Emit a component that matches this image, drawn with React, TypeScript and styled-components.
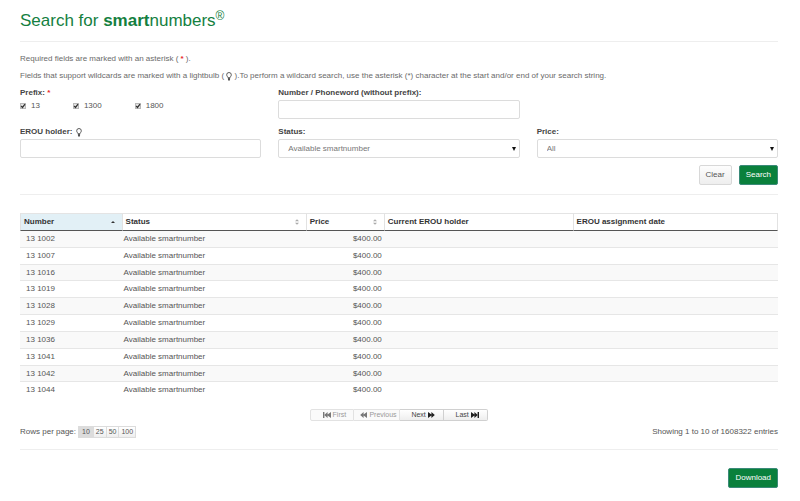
import React from "react";
import styled, { createGlobalStyle, css } from "styled-components";

const GlobalStyle = createGlobalStyle`
  *, *::before, *::after { box-sizing: border-box; }
  body {
    margin: 0;
    background: #fff;
    color: #555;
    font: 8px/12px "Liberation Sans", Arial, sans-serif;
  }
  button, input, select { font: inherit; color: inherit; margin: 0; }
`;

const Page = styled.main`
  padding: 8px 22px 12px 20px;
`;

const Title = styled.h1`
  margin: 0;
  padding-bottom: 7px;
  border-bottom: 1px solid #eee;
  color: #14803f;
  font-size: 17px;
  font-weight: 400;
  line-height: 26px;

  sup {
    font-size: 12px;
    line-height: 0;
    vertical-align: 6px;
  }
`;

const Intro = styled.div`
  padding-top: 11px;
  color: #6a6a6a;
`;

const Note = styled.p`
  margin: 0;
  padding-bottom: 4px;

  & + & { padding-top: 1px; }
`;

const Asterisk = styled.span`
  color: #e8262a;
  font-weight: 700;
`;

const SearchForm = styled.form`
  padding-bottom: 9px;
  border-bottom: 1px solid #eee;
`;

const FieldGrid = styled.div`
  display: grid;
  grid-template-columns: repeat(3, 1fr);
  column-gap: 17px;
  row-gap: 6px;
`;

const Field = styled.div`
  grid-column: ${(p: { $column?: number }) => p.$column ?? "auto"};
`;

const Label = styled.label`
  display: flex;
  align-items: center;
  gap: 4px;
  height: 14px;
  color: #444;
  font-weight: 700;
`;

const PrefixGroup = styled.fieldset`
  margin: 0;
  padding: 0;
  border: 0;
  min-width: 0;
`;

const Legend = styled.legend`
  padding: 0;
  height: 14px;
  line-height: 14px;
  color: #444;
  font-weight: 700;
`;

const Choices = styled.div`
  display: flex;
  gap: 33px;
`;

const Choice = styled.label`
  display: flex;
  align-items: center;
  gap: 5px;
`;

const CheckFrame = styled.span`
  display: grid;
  width: 6px;
  height: 6px;

  > * { grid-area: 1 / 1; }
  svg { pointer-events: none; visibility: hidden; }
  input:checked + svg { visibility: visible; }
`;

const Checkbox = styled.input`
  appearance: none;
  width: 6px;
  height: 6px;
  border: 1px solid #b8b8b8;
  background: #e4e4e4;
`;

const control = css`
  display: block;
  width: 100%;
  height: 19px;
  border: 1px solid #dcdcdc;
  border-radius: 2px;
  background: #fff;
`;

const TextInput = styled.input`
  ${control}
  padding: 0 8px;
`;

const SelectFrame = styled.div`
  display: grid;
  align-items: center;

  > * { grid-area: 1 / 1; }
  svg { justify-self: end; margin-right: 4px; pointer-events: none; }
`;

const Select = styled.select`
  ${control}
  appearance: none;
  padding: 0 9px;
  color: #777;
`;

const Actions = styled.div`
  display: flex;
  justify-content: flex-end;
  gap: 7px;
  padding-top: ${(p: { $top: number }) => p.$top}px;
`;

const Button = styled.button<{ $primary?: boolean }>`
  height: 20px;
  padding: 0 6px;
  border: 1px solid ${(p) => (p.$primary ? "#3a8a78" : "#d8d8d8")};
  border-radius: 2px;
  background: ${(p) => (p.$primary ? "#0a803c" : "linear-gradient(#fdfdfd, #eee)")};
  color: ${(p) => (p.$primary ? "#fff" : "#555")};
  line-height: 16px;
`;

const Results = styled.table`
  width: 100%;
  height: 185px;
  margin-top: 18px;
  table-layout: fixed;
  border-collapse: separate;
  border-spacing: 0;
`;

const HeaderCell = styled.th<{ $sorted?: boolean }>`
  height: 18px;
  padding: 0 3px;
  border-top: 1px solid #e4e4e4;
  border-bottom: 1px solid #555;
  border-left: 1px solid #e2e2e2;
  background: ${(p) => (p.$sorted ? "#e2f0f6" : "#fff")};
  color: #333;
  text-align: left;

  &:last-child { border-right: 1px solid #e2e2e2; }
`;

const HeaderInner = styled.div`
  display: flex;
  align-items: center;
  justify-content: space-between;
  padding-right: 4px;
`;

const Row = styled.tr`
  &:nth-child(odd) { background: #f9f9f9; }
  &:not(:last-child) td { border-bottom: 1px solid #e6e6e6; }
  &:last-child { background: #fff; }
`;

const Cell = styled.td<{ $indent?: boolean; $numeric?: boolean }>`
  padding: 0 2px 0 ${(p) => (p.$indent ? 6 : 2)}px;
  text-align: ${(p) => (p.$numeric ? "right" : "left")};
`;

const Pager = styled.nav`
  display: grid;
  grid-template-columns: repeat(4, minmax(44px, max-content));
  justify-content: center;
  padding-top: 11px;
`;

const PageButton = styled.button`
  display: flex;
  align-items: center;
  justify-content: center;
  gap: 2px;
  height: 12px;
  padding: 0 2px 0 6px;
  border: 1px solid #d0d0d0;
  border-left-width: 0;
  background: linear-gradient(#fff, #eee);
  color: #444;
  font-size: 7px;
  line-height: 10px;

  svg { color: #222; }
  &:first-child { border-left-width: 1px; border-radius: 2px 0 0 2px; }
  &:last-child { border-radius: 0 2px 2px 0; }
  &:disabled { color: #999; border-color: #e2e2e2; background: #fafafa; }
  &:disabled svg { color: #777; }
`;

const TableFooter = styled.div`
  display: flex;
  align-items: center;
  justify-content: space-between;
  padding: 5px 0 11px;
  border-bottom: 1px solid #eee;
`;

const RowsPerPage = styled.div`
  display: flex;
  align-items: center;
  gap: 2px;
`;

const SizeGroup = styled.div`
  display: flex;
`;

const SizeButton = styled.button<{ $active?: boolean }>`
  height: 12px;
  padding: 0 ${(p) => (p.$active ? 3 : 2)}px;
  border: 1px solid #dcdcdc;
  border-left-width: ${(p) => (p.$active ? 1 : 0)}px;
  background: ${(p) => (p.$active ? "#dcdcdc" : "linear-gradient(#fff, #eee)")};
  font-size: 7px;
  line-height: 10px;
`;

const Bulb = () => (
  <svg width="6" height="9" viewBox="0 0 6 9" aria-label="lightbulb" fill="none" stroke="#333">
    <path d="M2 5.8C2 4.8.7 4.3.7 2.8a2.3 2.3 0 0 1 4.6 0C5.3 4.3 4 4.8 4 5.8Z" strokeWidth=".8" />
    <path d="M1.9 6.7h2.2M2.2 7.9h1.6" strokeWidth="1.1" />
  </svg>
);

const InlineBulb = styled.span`
  display: inline-block;
  vertical-align: -3px;
  height: 9px;
  svg { display: block; }
`;

const Tick = () => (
  <svg width="6" height="6" viewBox="0 0 6 6" fill="none" stroke="#333" strokeWidth="1.3">
    <path d="M1.2 3 2.5 4.4 5 1.2" />
  </svg>
);

const Caret = () => (
  <svg width="4" height="4" viewBox="0 0 4 4">
    <path d="M0 0h4L2 4Z" fill="#111" />
  </svg>
);

const SortIcon = ({ ascending }: { ascending?: boolean }) => (
  <svg width="4" height="6" viewBox="0 0 4 6">
    {ascending ? (
      <path d="M0 4 2 2l2 2Z" fill="#333" />
    ) : (
      <path d="M0 2.3 2 .3l2 2ZM0 3.7l2 2 2-2Z" fill="#aaa" />
    )}
  </svg>
);

const SkipIcon = ({ back, end }: { back?: boolean; end?: boolean }) => (
  <svg width={end ? 8 : 7} height="6" viewBox={end ? "0 0 8 6" : "0 0 7 6"} fill="currentColor">
    <g transform={back ? `translate(${end ? 8 : 7} 0) scale(-1 1)` : undefined}>
      <path d="M0 0l3.4 2.6V0l3.4 3-3.4 3V3.4L0 6Z" />
      {end && <path d="M6.6 0H8v6H6.6Z" />}
    </g>
  </svg>
);

const prefixes = ["13", "1300", "1800"];
const numbers = ["1002", "1007", "1016", "1019", "1028", "1029", "1036", "1041", "1042", "1044"];
const columns = [
  { name: "Number", width: "13.4%", sort: "asc" },
  { name: "Status", width: "24.3%", sort: "none" },
  { name: "Price", width: "10.3%", sort: "none" },
  { name: "Current EROU holder", width: "24.9%" },
  { name: "EROU assignment date", width: "27.1%" },
];

export default function App() {
  return (
    <>
      <GlobalStyle />
      <Page>
        <Title>
          Search for <b>smart</b>numbers<sup>®</sup>
        </Title>
        <Intro>
          <Note>
            Required fields are marked with an asterisk ( <Asterisk>*</Asterisk> ).
          </Note>
          <Note>
            Fields that support wildcards are marked with a lightbulb ({" "}
            <InlineBulb><Bulb /></InlineBulb> ).To perform a wildcard search, use the asterisk (*)
            character at the start and/or end of your search string.
          </Note>
        </Intro>
        <SearchForm onSubmit={(e) => e.preventDefault()}>
          <FieldGrid>
            <PrefixGroup>
              <Legend>
                Prefix: <Asterisk>*</Asterisk>
              </Legend>
              <Choices>
                {prefixes.map((prefix) => (
                  <Choice key={prefix}>
                    <CheckFrame>
                      <Checkbox type="checkbox" name="prefix" value={prefix} defaultChecked />
                      <Tick />
                    </CheckFrame>
                    {prefix}
                  </Choice>
                ))}
              </Choices>
            </PrefixGroup>
            <Field>
              <Label htmlFor="phoneword">Number / Phoneword (without prefix):</Label>
              <TextInput id="phoneword" type="text" />
            </Field>
            <Field $column={1}>
              <Label htmlFor="holder">
                EROU holder: <Bulb />
              </Label>
              <TextInput id="holder" type="text" />
            </Field>
            <Field>
              <Label htmlFor="status">Status:</Label>
              <SelectFrame>
                <Select id="status">
                  <option>Available smartnumber</option>
                </Select>
                <Caret />
              </SelectFrame>
            </Field>
            <Field>
              <Label htmlFor="price">Price:</Label>
              <SelectFrame>
                <Select id="price">
                  <option>All</option>
                </Select>
                <Caret />
              </SelectFrame>
            </Field>
          </FieldGrid>
          <Actions $top={7}>
            <Button type="reset">Clear</Button>
            <Button type="submit" $primary>Search</Button>
          </Actions>
        </SearchForm>

        <Results>
          <colgroup>
            {columns.map((c) => (
              <col key={c.name} width={c.width} />
            ))}
          </colgroup>
          <thead>
            <tr>
              {columns.map((c) => (
                <HeaderCell key={c.name} scope="col" $sorted={c.sort === "asc"}>
                  <HeaderInner>
                    {c.name}
                    {c.sort && <SortIcon ascending={c.sort === "asc"} />}
                  </HeaderInner>
                </HeaderCell>
              ))}
            </tr>
          </thead>
          <tbody>
            {numbers.map((n) => (
              <Row key={n}>
                <Cell $indent>13 {n}</Cell>
                <Cell>Available smartnumber</Cell>
                <Cell $numeric>$400.00</Cell>
                <Cell />
                <Cell />
              </Row>
            ))}
          </tbody>
        </Results>

        <Pager aria-label="Pages">
          <PageButton type="button" disabled><SkipIcon back end /> First</PageButton>
          <PageButton type="button" disabled><SkipIcon back /> Previous</PageButton>
          <PageButton type="button">Next <SkipIcon /></PageButton>
          <PageButton type="button">Last <SkipIcon end /></PageButton>
        </Pager>
        <TableFooter>
          <RowsPerPage>
            Rows per page:
            <SizeGroup>
              <SizeButton type="button" $active>10</SizeButton>
              <SizeButton type="button">25</SizeButton>
              <SizeButton type="button">50</SizeButton>
              <SizeButton type="button">100</SizeButton>
            </SizeGroup>
          </RowsPerPage>
          <span>Showing 1 to 10 of 1608322 entries</span>
        </TableFooter>
        <Actions $top={18}>
          <Button type="button" $primary>Download</Button>
        </Actions>
      </Page>
    </>
  );
}
